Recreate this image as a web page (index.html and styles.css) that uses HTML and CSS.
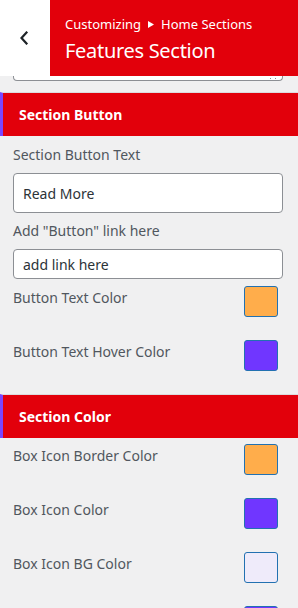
FILE: index.html
```html
<!DOCTYPE html>
<html>
<head>
<meta charset="utf-8">
<link rel="stylesheet" href="styles.css">
</head>
<body>
<div class="header">
  <div class="back">
    <svg width="10" height="14" viewBox="0 0 10 14"><polyline points="7.5,1.5 2.5,7 7.5,12.5" fill="none" stroke="#1d2327" stroke-width="2.2" stroke-linecap="square"/></svg>
  </div>
  <div class="titles">
    <div class="crumb">Customizing <svg class="tri" width="6" height="7" viewBox="0 0 6 7"><polygon points="0,0 6,3.5 0,7" fill="#fff"/></svg> Home Sections</div>
    <div class="title">Features Section</div>
  </div>
</div>
<div class="content">
  <div class="tail"><span class="grip"></span></div>

  <div class="section-head">Section Button</div>
  <div class="fields">
    <div class="label first">Section Button Text</div>
    <div class="input tall">Read More</div>
    <div class="label">Add "Button" link here</div>
    <div class="input short">add link here</div>
    <div class="color-row"><span class="clabel">Button Text Color</span><span class="swatch orange"></span></div>
    <div class="color-row"><span class="clabel">Button Text Hover Color</span><span class="swatch purple"></span></div>
  </div>

  <div class="section-head">Section Color</div>
  <div class="fields rows2">
    <div class="color-row"><span class="clabel">Box Icon Border Color</span><span class="swatch orange"></span></div>
    <div class="color-row"><span class="clabel">Box Icon Color</span><span class="swatch purple"></span></div>
    <div class="color-row"><span class="clabel">Box Icon BG Color</span><span class="swatch lavender"></span></div>
    <div class="color-row"><span class="clabel"></span><span class="swatch purple"></span></div>
  </div>
</div>
</body>
</html>
```

FILE: styles.css
```css
html, body {
  margin: 0;
  padding: 0;
}
body {
  width: 298px;
  height: 608px;
  overflow: hidden;
  background: #f0f0f1;
  font-family: "Noto Sans", "Open Sans", sans-serif;
  color: #50575e;
}
.header {
  display: flex;
  height: 76px;
}
.back {
  width: 50px;
  background: #fff;
  display: flex;
  align-items: center;
  justify-content: center;
}
.back svg {
  margin-left: -2px;
}
.titles {
  flex: 1;
  background: #e2000b;
  color: #fff;
  padding: 15px 0 0 15px;
}
.crumb {
  font-size: 13px;
  line-height: 18px;
  display: flex;
  align-items: center;
  gap: 7px;
}
.title {
  font-size: 20px;
  line-height: 26px;
  margin-top: 5px;
  letter-spacing: -0.3px;
}
.content {
  display: flex;
  flex-direction: column;
}
.tail {
  position: relative;
  margin: 0 15px 0 13px;
  height: 4px;
  background: #fff;
  border: 1px solid #8c8f94;
  border-top: none;
  border-radius: 0 0 4px 4px;
}
.grip {
  position: absolute;
  right: 6px;
  bottom: 1px;
  width: 4px;
  height: 1px;
  border-left: 1px solid #8c8f94;
  border-right: 1px solid #8c8f94;
}
.section-head {
  margin-top: 11px;
  height: 43px;
  background: #e2000b;
  border-top: 1px solid #dcdcde;
  border-left: 3px solid #7b46ff;
  padding-left: 16px;
  color: #fff;
  font-size: 14px;
  font-weight: 700;
  display: flex;
  align-items: center;
}
.fields + .section-head {
  margin-top: 0;
}
.fields {
  padding: 0 15px 0 13px;
  display: flex;
  flex-direction: column;
}
.label {
  font-size: 14px;
  line-height: 20px;
  margin-top: 8px;
}
.label.first {
  margin-top: 9px;
}
.input {
  margin-top: 8px;
  background: #fff;
  border: 1px solid #8c8f94;
  border-radius: 4px;
  box-sizing: border-box;
  padding-left: 9px;
  font-size: 14px;
  color: #2c3338;
  display: flex;
  align-items: center;
}
.input.tall {
  height: 40px;
}
.input.short {
  height: 30px;
}
.color-row {
  display: flex;
  justify-content: space-between;
  align-items: flex-start;
  height: 54px;
}
.fields .input.short + .color-row {
  margin-top: 7px;
}
.rows2 {
  padding-top: 6px;
}
.clabel {
  font-size: 14px;
  line-height: 20px;
  margin-top: 2px;
}
.swatch {
  width: 34px;
  height: 31px;
  box-sizing: border-box;
  border: 1px solid #2271b1;
  border-radius: 3px;
  margin-right: 5px;
}
.orange { background: #ffad4b; }
.purple { background: #7036ff; }
.lavender { background: #efebfa; }
```
